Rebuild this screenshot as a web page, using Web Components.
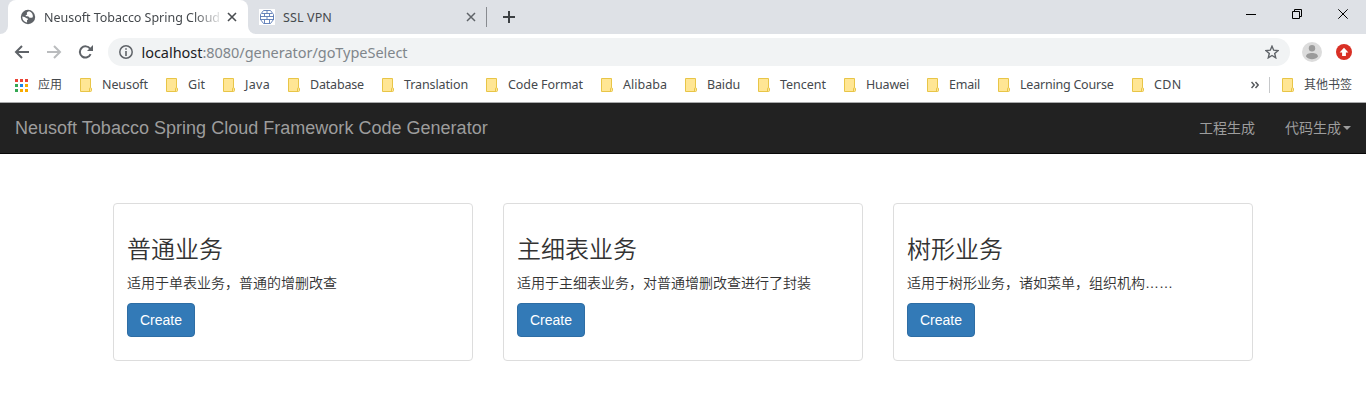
<!DOCTYPE html>
<html lang="zh-CN">
<head>
<meta charset="utf-8">
<title>Neusoft Tobacco Spring Cloud Framework Code Generator</title>
<style>
html,body{margin:0;height:401px;overflow:hidden;background:#fff}
body{display:flex;flex-direction:column}
</style>
</head>
<body>
<browser-tabs></browser-tabs>
<browser-toolbar></browser-toolbar>
<bookmark-bar>
<bookmark-item w="46" pitch="86">Neusoft</bookmark-item>
<bookmark-item w="17" pitch="57">Git</bookmark-item>
<bookmark-item w="25" pitch="65">Java</bookmark-item>
<bookmark-item w="54" pitch="94">Database</bookmark-item>
<bookmark-item w="64" pitch="104">Translation</bookmark-item>
<bookmark-item w="75" pitch="115">Code Format</bookmark-item>
<bookmark-item w="44" pitch="84">Alibaba</bookmark-item>
<bookmark-item w="33" pitch="73">Baidu</bookmark-item>
<bookmark-item w="46" pitch="86">Tencent</bookmark-item>
<bookmark-item w="43" pitch="83">Huawei</bookmark-item>
<bookmark-item w="31" pitch="71">Email</bookmark-item>
<bookmark-item w="93.500" pitch="134">Learning Course</bookmark-item>
<bookmark-item w="27.500" pitch="67">CDN</bookmark-item>
</bookmark-bar>
<app-navbar>
<span slot="brand">Neusoft Tobacco Spring Cloud Framework Code Generator</span>
<nav-link>工程生成</nav-link>
<nav-link caret>代码生成</nav-link>
</app-navbar>
<card-row>
<type-card><span slot="title">普通业务</span>适用于单表业务，普通的增删改查</type-card>
<type-card><span slot="title">主细表业务</span>适用于主细表业务，对普通增删改查进行了封装</type-card>
<type-card><span slot="title">树形业务</span>适用于树形业务，诸如菜单，组织机构……</type-card>
</card-row>
<script>
const UI = 'font-family:"Noto Sans","Noto Sans CJK SC",sans-serif;';
function define(name, html, ready) {
  const t = document.createElement('template');
  t.innerHTML = html;
  customElements.define(name, class extends HTMLElement {
    constructor() {
      super();
      this.attachShadow({mode: 'open'}).append(t.content.cloneNode(true));
    }
    connectedCallback() { if (ready) ready(this, this.shadowRoot); }
  });
}

define('folder-icon', `<style>:host{display:block;width:12px;height:14px;flex:none}svg{display:block}</style>
<svg width="12" height="14" viewBox="0 0 12 14"><path d="M.5.5h10v9.2q1 .1 1 1.1v1.7q0 1-1 1H.5z" fill="#ffe694" stroke="#e8c547"/><path d="M9.5 13v-2.300q0-1 1-1" fill="none" stroke="#e8c547"/></svg>`);

define('browser-tabs', `<style>
:host{display:flex;height:34px;background:#dee1e6;flex:none;${UI}font-size:12.500px;line-height:16px;color:#45494d}
.lead{width:8px;background:#fff}.lead i,.trail i{display:block;height:34px;background:#dee1e6}
.lead i{border-bottom-right-radius:8px}.trail{flex:1;background:#fff}
.trail i{border-bottom-left-radius:8px;display:flex;font-style:normal}
.active{width:240px;box-sizing:border-box;background:#fff;border-radius:8px 8px 0 0;display:flex;padding:9px 0 0 12px}
.t{margin:1px 0 0 8px;width:177px;-webkit-mask:linear-gradient(90deg,#000 150px,transparent 180px);mask:linear-gradient(90deg,#000 150px,transparent 180px)}
svg{display:block;flex:none}
.x{margin:3px 0 0 6px}
.fav{margin:9px 8px 0 11px}.ssl{margin-top:10px}
.sep{width:1px;height:20px;background:#888b90;margin:7px 0 0 10px}
.win{margin-left:auto}
</style>
<div class="lead"><i></i></div>
<div class="active">
<svg width="16" height="16" viewBox="0 0 16 16"><circle cx="8" cy="8" r="7.200" fill="#5f6368"/><path d="M9.300 2.300c-1.500.2-2.500 1-2.500 1.800 0 .7.500.9.300 1.500-.3.700-1.500.4-1.500 1.200 0 .6 1 .5 1.800.5 1.500 0 1.500 1.100 2.200 1.400.8.300 2 .1 3.200-.4.500-2.200-.8-5-3.500-6z" fill="#fff"/><path d="M2.300 7.600c1.500.1 3.100.8 3.800 1.300.7.500 2 .5 2 1.200 0 .8-1 .6-1.100 1.400-.1.700.2 1.300.1 2.100C4.200 13.300 2.200 10.600 2.300 7.600z" fill="#fff"/></svg>
<div class="t"><fit-label w="176">Neusoft Tobacco Spring Cloud</fit-label></div>
<svg class="x" width="10" height="10" viewBox="0 0 10 10"><path d="M1 1l8 8M9 1L1 9" stroke="#4a4d51" stroke-width="1.600"/></svg>
</div>
<div class="trail"><i>
<svg class="fav" width="16" height="16" viewBox="0 0 16 16"><path fill="#fff" d="M0 0h16v16H0z"/><path d="M4.500 1.500h7l3 4v5l-3 4h-7l-3-4v-5zM3 4.500h10M1 7.500h14M1 10.500h14M8 1v3.500M5.500 4.500v3M10.500 4.500v3M8 7.500v3M5.500 10.500v4M10.500 10.500v4" fill="none" stroke="#5878b4" stroke-width=".9"/></svg>
<fit-label class="ssl" w="49">SSL VPN</fit-label>
<svg style="margin:12px 0 0 134px" width="10" height="10" viewBox="0 0 10 10"><path d="M1 1l8 8M9 1L1 9" stroke="#5f6368" stroke-width="1.500"/></svg>
<span class="sep"></span>
<svg style="margin:11px 0 0 16px" width="12" height="12" viewBox="0 0 12 12"><path d="M6 0v12M0 6h12" stroke="#3c4043" stroke-width="2"/></svg>
<svg class="win" width="120" height="28" viewBox="0 0 120 28" fill="none" stroke="#000"><path d="M0 14.500h10M46.500 11.500h7v7h-7zM48.500 11v-1.500h7v7H54M92.300 9.300l9.400 9.400M101.700 9.300l-9.400 9.400"/></svg>
</i></div>`);

define('browser-toolbar', `<style>
:host{display:flex;height:34px;flex:none;background:#fff;align-items:flex-start;${UI}}
svg{display:block;flex:none}
.nav{margin:11px 0 0 14px}
.box{display:flex;margin:4px 0 0 13px;width:1182px;height:28px;border-radius:14px;background:#f1f3f4;align-items:center;font-size:14.500px;line-height:20px;color:#80868b}
.box b{font-weight:400;color:#202124}.info{margin:0 8.500px 0 11px}.star{margin:0 11px 0 auto}
</style>
<svg class="nav" width="81" height="14" viewBox="0 0 81 14" fill="none" stroke="#5f6368" stroke-width="2"><path d="M15 7H2M8 1L2 7l6 6"/><path d="M33 7h13M40 1l6 6-6 6" stroke="#babcbe"/><path d="M76.600 9.200a5.600 5.600 0 1 1-.5-5.400"/><path d="M79 0v6h-6z" fill="#5f6368" stroke="none"/></svg>
<div class="box">
<svg class="info" width="14" height="14" viewBox="0 0 14 14"><circle cx="7" cy="7" r="6.200" fill="none" stroke="#5f6368" stroke-width="1.500"/><path d="M7 6v5M7 3.200v1.600" stroke="#5f6368" stroke-width="1.600"/></svg>
<fit-label w="266"><b>localhost</b>:8080/generator/goTypeSelect</fit-label>
<svg class="star" width="14" height="14" viewBox="0 0 14 14"><path d="M7 1.200l1.700 4 4.300.4-3.300 2.900 1 4.300L7 10.500l-3.700 2.300 1-4.300L1 5.600l4.300-.4z" fill="none" stroke="#5f6368" stroke-width="1.400"/></svg>
</div>
<svg style="margin:8px 0 0 12px" width="20" height="20" viewBox="0 0 20 20"><circle cx="10" cy="10" r="10" fill="#dcdcdc"/><circle cx="10" cy="6.200" r="3.200" fill="#9b9b9b"/><path d="M4 14.500c0-2.500 3-3.500 6-3.500s6 1 6 3.500c-1.500 1.800-3.500 2.800-6 2.800s-4.500-1-6-2.800z" fill="#9b9b9b"/></svg>
<svg style="margin:10px 0 0 14px" width="16" height="16" viewBox="0 0 16 16"><circle cx="8" cy="8" r="8" fill="#d93025"/><path d="M8 3.800l4.400 4.700H9.900V12H6.100V8.500H3.600z" fill="#fff"/></svg>`);

define('bookmark-bar', `<style>
:host{display:flex;height:34px;flex:none;border-bottom:1px solid #a9aaab;align-items:center;background:#fff;${UI}font-size:12.500px;line-height:16px;color:#45494d}
svg{display:block;flex:none}.apps{margin:0 10px 0 15px}.app{width:42px;font-size:12px}
i{width:1px;height:16px;background:#c6c8ca;margin:0 12px 0 10px}
.more{margin-left:52px}.other{margin-left:10px;font-size:12px}
</style>
<svg class="apps" width="13" height="13" viewBox="0 0 13 13"><path fill="#ea4335" d="M0 0h3v3H0zM5 0h3v3H5zM10 0h3v3h-3z"/><path fill="#34a853" d="M0 5h3v3H0zM0 10h3v3H0z"/><path fill="#1a84e8" d="M5 5h3v3H5z"/><path fill="#f9ab00" d="M10 5h3v3h-3zM5 10h3v3H5zM10 10h3v3h-3z"/></svg>
<span class="app">应用</span><slot></slot>
<svg class="more" width="8" height="8" viewBox="0 0 8 8"><path d="M.5 1L3.200 4l-2.700 3M4.500 1L7.200 4l-2.700 3" fill="none" stroke="#55585c" stroke-width="1.500"/></svg>
<i></i><folder-icon></folder-icon><span class="other">其他书签</span>`);

define('bookmark-item', `<style>:host{display:flex;flex:none;align-items:center}fit-label{margin-left:10px}</style><folder-icon></folder-icon>`,
  (el, root) => {
    const l = document.createElement('fit-label');
    l.setAttribute('w', el.getAttribute('w'));
    l.textContent = el.textContent;
    el.style.width = el.getAttribute('pitch') + 'px';
    root.append(l);
  });

define('fit-label', `<style>:host{display:block;white-space:nowrap;flex:none}span{display:inline-block}</style><span><slot></slot></span>`,
  (el, root) => {
    const s = root.querySelector('span'), w = +el.getAttribute('w');
    const n = el.textContent.length;
    s.style.letterSpacing = (w - s.getBoundingClientRect().width) / n + 'px';
    el.style.width = w + 'px';
  });

define('nav-link', `<style>
:host{display:flex;align-items:center;padding:15px;line-height:20px;font-size:14px;color:#9d9d9d}
i{display:none;border-top:4px solid;border-left:4px solid transparent;border-right:4px solid transparent;margin-left:2px}
:host([caret]) i{display:block}
</style><slot></slot><i></i>`);

define('app-navbar', `<style>
:host{display:flex;flex:none;height:50px;background:#222;border-bottom:1px solid #080808;justify-content:space-between;font-family:"Liberation Sans","Noto Sans CJK SC",sans-serif;color:#9d9d9d}
.brand{padding:15px;font-size:18px;line-height:20px;letter-spacing:.015px}.links{display:flex}
</style><div class="brand"><slot name="brand"></slot></div><div class="links"><slot></slot></div>`);

define('card-row', `<style>:host{display:grid;grid-template-columns:repeat(3,360px);gap:30px;padding:49px 113px 0}</style><slot></slot>`);

define('type-card', `<style>
:host{display:block;box-sizing:border-box;height:158px;border:1px solid #ddd;border-radius:4px;padding:13px;font:350 14px/20px "Liberation Sans","Noto Sans CJK SC DemiLight","Noto Sans CJK SC",sans-serif;color:#333}
h3{margin:20px 0 10px;font-size:24px;line-height:26.400px;font-weight:350}
p{margin:0 0 10px;font-weight:400}
button{display:block;height:34px;padding:6px 12px;border:1px solid #2e6da4;border-radius:4px;background:#337ab7;color:#fff;font:14px/20px "Liberation Sans",sans-serif}
</style><h3><slot name="title"></slot></h3><p><slot></slot></p><button>Create</button>`);
</script>
</body>
</html>
